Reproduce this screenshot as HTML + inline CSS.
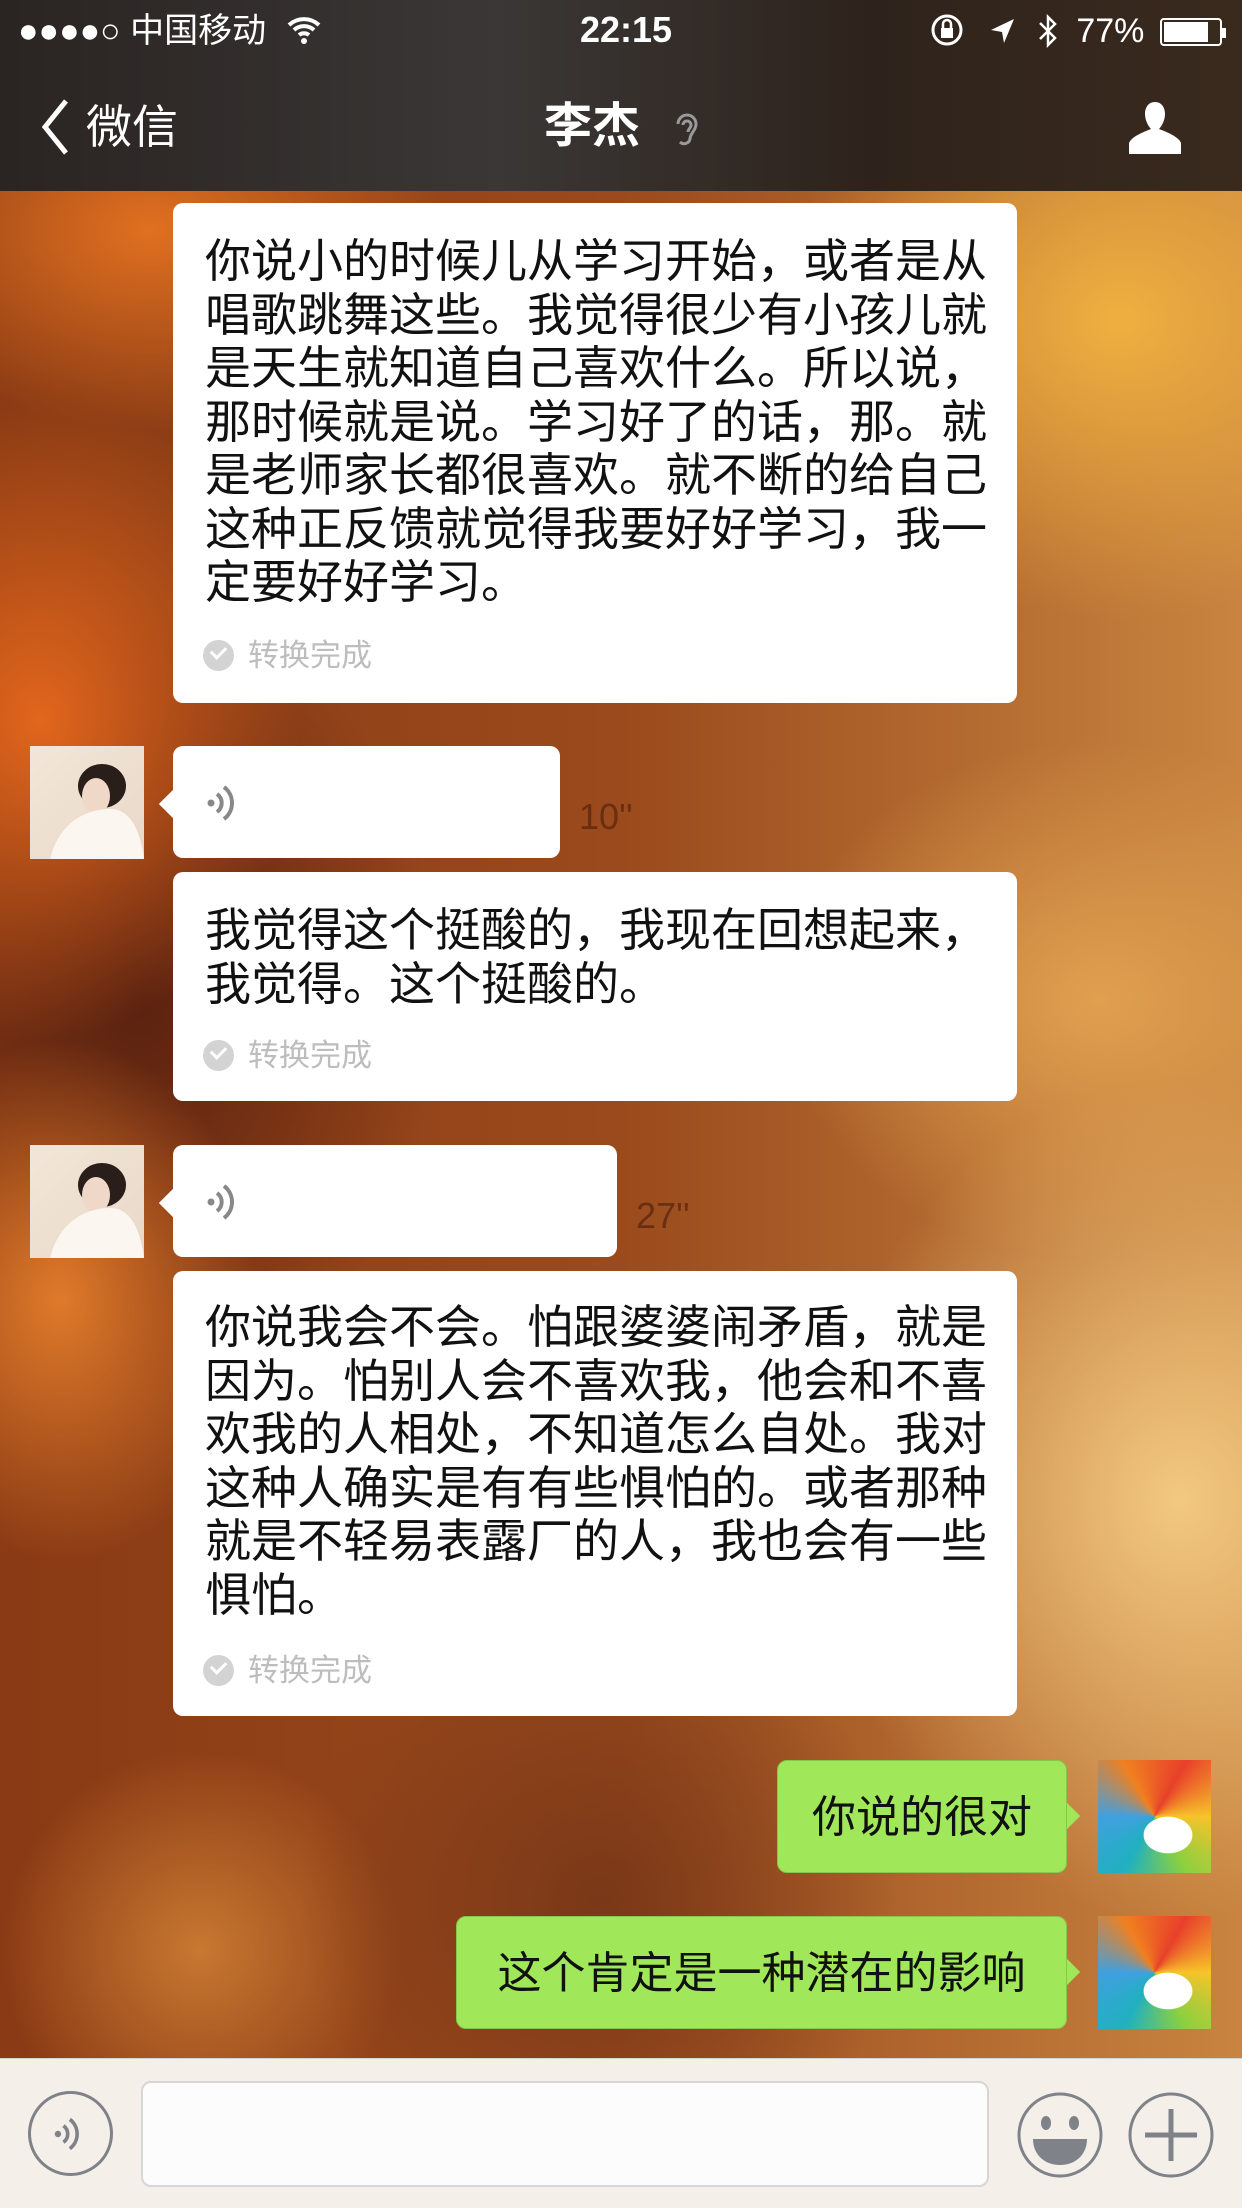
<!DOCTYPE html>
<html><head><meta charset="utf-8">
<style>
*{margin:0;padding:0;box-sizing:border-box}
body{width:1242px;height:2208px;overflow:hidden;position:relative;font-family:"Liberation Sans","Noto Sans CJK SC",sans-serif;
background:
radial-gradient(ellipse 260px 320px at 40px 720px,#e2661c 0%,rgba(226,102,28,0) 100%),
radial-gradient(ellipse 300px 200px at 150px 230px,#e07020 0%,rgba(224,112,32,0) 100%),
radial-gradient(ellipse 200px 260px at 60px 1300px,#e07a2a 0%,rgba(224,122,42,0) 100%),
radial-gradient(ellipse 340px 300px at 1120px 320px,#f0b040 0%,rgba(240,176,64,0) 100%),
radial-gradient(ellipse 360px 420px at 1180px 1500px,#f2c880 0%,rgba(242,200,128,0) 100%),
radial-gradient(ellipse 320px 260px at 1100px 1000px,#e0a050 0%,rgba(224,160,80,0) 100%),
radial-gradient(ellipse 300px 400px at 140px 1000px,#5a2210 0%,rgba(90,34,16,0) 100%),
radial-gradient(ellipse 300px 300px at 600px 1900px,#7a3818 0%,rgba(122,56,24,0) 100%),
radial-gradient(ellipse 200px 200px at 200px 1950px,#c87830 0%,rgba(200,120,48,0) 100%),
linear-gradient(90deg,#8a3a14 0%,#9a4a1c 50%,#c88440 100%);}
.nav{position:absolute;left:0;top:0;width:1242px;height:191px;background:linear-gradient(90deg,#2a2422,#3a3736 40%,#2e231c 70%,#3a2a1e);color:#fff}
.w{position:absolute;color:#fff;white-space:nowrap}
.b{position:absolute;background:#fff;border-radius:10px}
.t{position:absolute;left:32px;font-size:46px;line-height:53.5px;color:#111;white-space:nowrap}
.done{position:absolute;left:30px;font-size:31px;color:#bdbdbd;white-space:nowrap;line-height:34px}
.done i{display:inline-block;width:31px;height:31px;border-radius:50%;background:#d3d3d3;vertical-align:-5px;margin-right:14px;position:relative}
.done i:after{content:"";position:absolute;left:8px;top:6px;width:12px;height:7px;border-left:3px solid #fff;border-bottom:3px solid #fff;transform:rotate(-45deg)}
.av{position:absolute;width:114px;height:113px;background:linear-gradient(135deg,#f3e6d8,#e8d8c8)}
.av2{position:absolute;width:113px;height:113px;background:
radial-gradient(ellipse 40px 30px at 70px 75px,#fff 60%,transparent 62%),
conic-gradient(from 30deg at 50% 50%,#e8402a,#f7c32a,#8ad040,#20b0c0,#40a0e0,#f08020,#e8402a)}
.tail{position:absolute;width:20px;height:20px;background:#fff;transform:rotate(45deg)}
.g{position:absolute;background:#a0e75a;border:1px solid #86c84a;border-radius:10px;font-size:44px;color:#111;white-space:nowrap;line-height:113px;text-align:center}
.gt{position:absolute;width:20px;height:20px;background:#a0e75a;transform:rotate(45deg)}
.dur{position:absolute;font-size:36px;color:rgba(80,30,10,.65)}
</style></head><body>
<div class="nav">
 <div class="w" style="left:18px;top:10px;font-size:34px;line-height:42px">●●●●○ 中国移动
  <svg width="36" height="30" viewBox="0 0 36 30" style="vertical-align:-3px;margin-left:10px"><path d="M3 10a22 22 0 0 1 30 0M8 15a15 15 0 0 1 20 0M13 20a8 8 0 0 1 10 0" stroke="#fff" stroke-width="4" fill="none"/><circle cx="18" cy="26" r="3" fill="#fff"/></svg></div>
 <div class="w" style="left:580px;top:8px;font-size:36px;line-height:44px;font-weight:bold">22:15</div>
 <div class="w" style="left:930px;top:10px;font-size:34px;line-height:42px">
  <svg width="34" height="34" viewBox="0 0 34 34" style="vertical-align:-5px"><circle cx="17" cy="17" r="14" stroke="#fff" stroke-width="3" fill="none"/><rect x="11" y="15" width="12" height="10" fill="#fff"/><path d="M13 15v-4a4 4 0 0 1 8 0v4" stroke="#fff" stroke-width="2.5" fill="none"/></svg>
  <svg width="30" height="30" viewBox="0 0 30 30" style="vertical-align:-4px;margin-left:14px"><path d="M4 14L27 3L17 27L15 16Z" fill="#fff"/></svg>
  <svg width="22" height="34" viewBox="0 0 22 34" style="vertical-align:-6px;margin-left:10px"><path d="M3 9l15 15l-7 7V3l7 7L3 25" stroke="#fff" stroke-width="2.5" fill="none"/></svg>
  <span style="margin-left:8px">77%</span>
  <span style="display:inline-block;width:62px;height:28px;border:2px solid #fff;border-radius:4px;vertical-align:-4px;margin-left:6px;position:relative"><span style="position:absolute;left:2px;top:2px;width:44px;height:20px;background:#fff"></span></span><span style="display:inline-block;width:4px;height:10px;background:#fff;vertical-align:4px"></span>
 </div>
 <svg style="position:absolute;left:40px;top:98px" width="30" height="58" viewBox="0 0 30 58"><path d="M26 3L5 29l21 26" stroke="#fff" stroke-width="5" fill="none"/></svg>
 <div class="w" style="left:86px;top:98px;font-size:46px;line-height:58px">微信</div>
 <div class="w" style="left:544px;top:98px;font-size:48px;line-height:58px;font-weight:bold">李杰</div>
 <svg style="position:absolute;left:672px;top:110px" width="30" height="40" viewBox="0 0 30 40"><path d="M6 14a9 9 0 0 1 18 0c0 7-6 9-6 15a6 6 0 0 1-10 3M11 15a4 4 0 0 1 8 0c0 3-3 4-3 7" stroke="#999" stroke-width="3" fill="none"/></svg>
 <svg style="position:absolute;left:1126px;top:100px" width="58" height="54" viewBox="0 0 58 54"><path d="M29 2c-7 0-10 6-10 12c0 7 4 13 6 15c-8 3-20 8-22 14v11h52V43c-2-6-14-11-22-14c2-2 6-8 6-15c0-6-3-12-10-12z" fill="#fff"/></svg>
</div>

<div class="b" style="left:173px;top:203px;width:844px;height:500px">
 <div class="t" style="top:32px">你说小的时候儿从学习开始，或者是从<br>唱歌跳舞这些。我觉得很少有小孩儿就<br>是天生就知道自己喜欢什么。所以说，<br>那时候就是说。学习好了的话，那。就<br>是老师家长都很喜欢。就不断的给自己<br>这种正反馈就觉得我要好好学习，我一<br>定要好好学习。</div>
 <div class="done" style="top:436px"><i></i>转换完成</div>
</div>

<div class="av" style="left:30px;top:746px"><svg width="114" height="113"><ellipse cx="72" cy="40" rx="24" ry="22" fill="#2a1e1a"/><ellipse cx="66" cy="50" rx="14" ry="18" fill="#f0d8c8"/><path d="M20 113c10-40 40-50 60-50s30 20 34 50z" fill="#fbf6ef"/></svg></div>
<div class="tail" style="left:163px;top:794px"></div>
<div class="b" style="left:173px;top:746px;width:387px;height:112px"></div>
<svg style="position:absolute;left:204px;top:780px" width="36" height="46" viewBox="0 0 36 46"><circle cx="7" cy="23" r="3.5" fill="#888"/><path d="M13 14a11 11 0 0 1 0 18M20 7a20 20 0 0 1 0 32" stroke="#888" stroke-width="4" fill="none"/></svg>
<div class="dur" style="left:579px;top:796px">10''</div>

<div class="b" style="left:173px;top:872px;width:844px;height:229px">
 <div class="t" style="top:32px">我觉得这个挺酸的，我现在回想起来，<br>我觉得。这个挺酸的。</div>
 <div class="done" style="top:167px"><i></i>转换完成</div>
</div>

<div class="av" style="left:30px;top:1145px"><svg width="114" height="113"><ellipse cx="72" cy="40" rx="24" ry="22" fill="#2a1e1a"/><ellipse cx="66" cy="50" rx="14" ry="18" fill="#f0d8c8"/><path d="M20 113c10-40 40-50 60-50s30 20 34 50z" fill="#fbf6ef"/></svg></div>
<div class="tail" style="left:163px;top:1193px"></div>
<div class="b" style="left:173px;top:1145px;width:444px;height:112px"></div>
<svg style="position:absolute;left:204px;top:1179px" width="36" height="46" viewBox="0 0 36 46"><circle cx="7" cy="23" r="3.5" fill="#888"/><path d="M13 14a11 11 0 0 1 0 18M20 7a20 20 0 0 1 0 32" stroke="#888" stroke-width="4" fill="none"/></svg>
<div class="dur" style="left:636px;top:1195px">27''</div>

<div class="b" style="left:173px;top:1271px;width:844px;height:445px">
 <div class="t" style="top:30px">你说我会不会。怕跟婆婆闹矛盾，就是<br>因为。怕别人会不喜欢我，他会和不喜<br>欢我的人相处，不知道怎么自处。我对<br>这种人确实是有有些惧怕的。或者那种<br>就是不轻易表露厂的人，我也会有一些<br>惧怕。</div>
 <div class="done" style="top:383px"><i></i>转换完成</div>
</div>

<div class="gt" style="left:1056px;top:1806px"></div>
<div class="g" style="left:777px;top:1760px;width:290px;height:113px">你说的很对</div>
<div class="av2" style="left:1098px;top:1760px"></div>
<div class="gt" style="left:1056px;top:1962px"></div>
<div class="g" style="left:456px;top:1916px;width:611px;height:113px">这个肯定是一种潜在的影响</div>
<div class="av2" style="left:1098px;top:1916px"></div>

<div style="position:absolute;left:0;top:2058px;width:1242px;height:150px;background:#f4efe9;border-top:1px solid #d8d4ce"></div>
<div style="position:absolute;left:28px;top:2091px;width:85px;height:85px;border:3px solid #7f8288;border-radius:50%"></div>
<svg style="position:absolute;left:50px;top:2113px" width="36" height="42" viewBox="0 0 36 46"><circle cx="7" cy="23" r="3.5" fill="#7f8288"/><path d="M13 14a11 11 0 0 1 0 18M20 7a20 20 0 0 1 0 32" stroke="#7f8288" stroke-width="4" fill="none"/></svg>
<div style="position:absolute;left:141px;top:2081px;width:848px;height:106px;background:#fcfcfc;border:2px solid #d6d6d6;border-radius:10px"></div>
<svg style="position:absolute;left:1016px;top:2091px" width="88" height="88" viewBox="0 0 88 88"><circle cx="44" cy="44" r="41" stroke="#7f8288" stroke-width="3" fill="none"/><ellipse cx="30" cy="32" rx="5" ry="7" fill="#7f8288"/><ellipse cx="58" cy="32" rx="5" ry="7" fill="#7f8288"/><path d="M17 48h54c0 16-12 26-27 26s-27-10-27-26z" fill="#7f8288"/></svg>
<svg style="position:absolute;left:1127px;top:2091px" width="88" height="88" viewBox="0 0 88 88"><circle cx="44" cy="44" r="41" stroke="#7f8288" stroke-width="3" fill="none"/><path d="M44 18v52M18 44h52" stroke="#7f8288" stroke-width="5"/></svg>
</body></html>
